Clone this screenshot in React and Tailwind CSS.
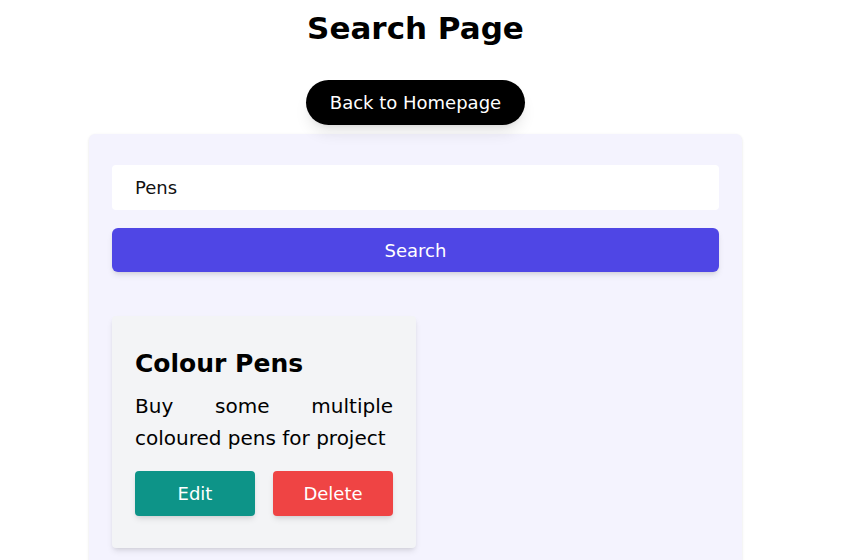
import React from 'react';

const App = () => {
  return (
    <div className="min-h-screen bg-white pr-3 text-black" style={{ fontFamily: '"DejaVu Sans", sans-serif' }}>
      {/* Header */}
      <h1 className="pt-[10px] text-center text-[31px] leading-[36px] font-bold">Search Page</h1>

      <div className="mt-[34px] flex justify-center">
        <button className="h-[45px] w-[219px] rounded-full bg-black text-[18px] text-white shadow-lg">
          Back to Homepage
        </button>
      </div>

      {/* Search panel */}
      <div className="mx-auto mt-[9px] min-h-[430px] w-[653px] rounded-md bg-[#f4f3fe] px-[23px] pt-[31px] pb-[23px] shadow-sm">
        <input
          type="text"
          defaultValue="Pens"
          className="block h-[45px] w-full rounded-sm bg-white px-[23px] text-[18px] text-[#111] outline-none"
        />
        <button className="mt-[18px] h-[44px] w-full rounded-md bg-[#4f46e5] text-[18px] text-white shadow-md">
          Search
        </button>

        {/* Results */}
        <div className="mt-[44px] grid grid-cols-2">
          <div className="w-[304px] rounded-sm bg-[#f3f4f6] px-[23px] pt-8 pb-8 shadow-md">
            <h2 className="text-[25px] leading-[32px] font-bold">Colour Pens</h2>
            <p className="mt-[10px] text-justify text-[20px] leading-8">
              Buy some multiple coloured pens for project
            </p>
            <div className="mt-[17px] flex gap-[18px]">
              <button className="h-[45px] w-[120px] rounded-sm bg-[#0d9488] text-[18px] text-white shadow-md">
                Edit
              </button>
              <button className="h-[45px] w-[120px] rounded-sm bg-[#ef4444] text-[18px] text-white shadow-md">
                Delete
              </button>
            </div>
          </div>
        </div>
      </div>
    </div>
  );
};

export default App;
